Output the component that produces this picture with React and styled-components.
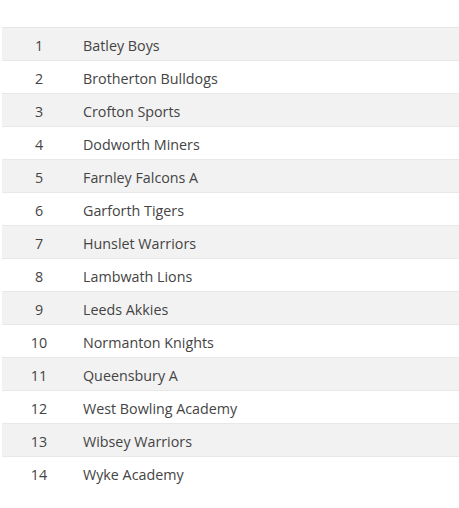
import styled, { createGlobalStyle } from "styled-components";

const GlobalStyle = createGlobalStyle`
  html, body {
    margin: 0;
    padding: 0;
    background: #fff;
  }
  body {
    font-family: "Open Sans", "Liberation Sans", sans-serif;
  }
`;

const Page = styled.div`
  padding: 27px 0 0 2px;
`;

const Table = styled.table`
  width: 100%;
  border-collapse: collapse;
  border-top: 1px solid #e6e6e6;
`;

const Row = styled.tr`
  height: 33px;
  background: ${(props) => (props.$striped ? "#f2f2f2" : "#fff")};
  border-bottom: 1px solid #e8e8e8;

  &:last-child {
    border-bottom: none;
  }
`;

const NumCell = styled.td`
  width: 74px;
  padding: 2px 0 0;
  text-align: center;
  font-size: 14.3px;
  color: #444;
`;

const NameCell = styled.td`
  padding: 2px 0 0 7px;
  font-size: 14.3px;
  color: #444;
`;

const teams = [
  "Batley Boys",
  "Brotherton Bulldogs",
  "Crofton Sports",
  "Dodworth Miners",
  "Farnley Falcons A",
  "Garforth Tigers",
  "Hunslet Warriors",
  "Lambwath Lions",
  "Leeds Akkies",
  "Normanton Knights",
  "Queensbury A",
  "West Bowling Academy",
  "Wibsey Warriors",
  "Wyke Academy",
];

const App = () => {
  return (
    <>
      <GlobalStyle />
      <Page>
        <Table>
          <tbody>
            {teams.map((team, index) => (
              <Row key={team} $striped={index % 2 === 0}>
                <NumCell>{index + 1}</NumCell>
                <NameCell>{team}</NameCell>
              </Row>
            ))}
          </tbody>
        </Table>
      </Page>
    </>
  );
};

export default App;
